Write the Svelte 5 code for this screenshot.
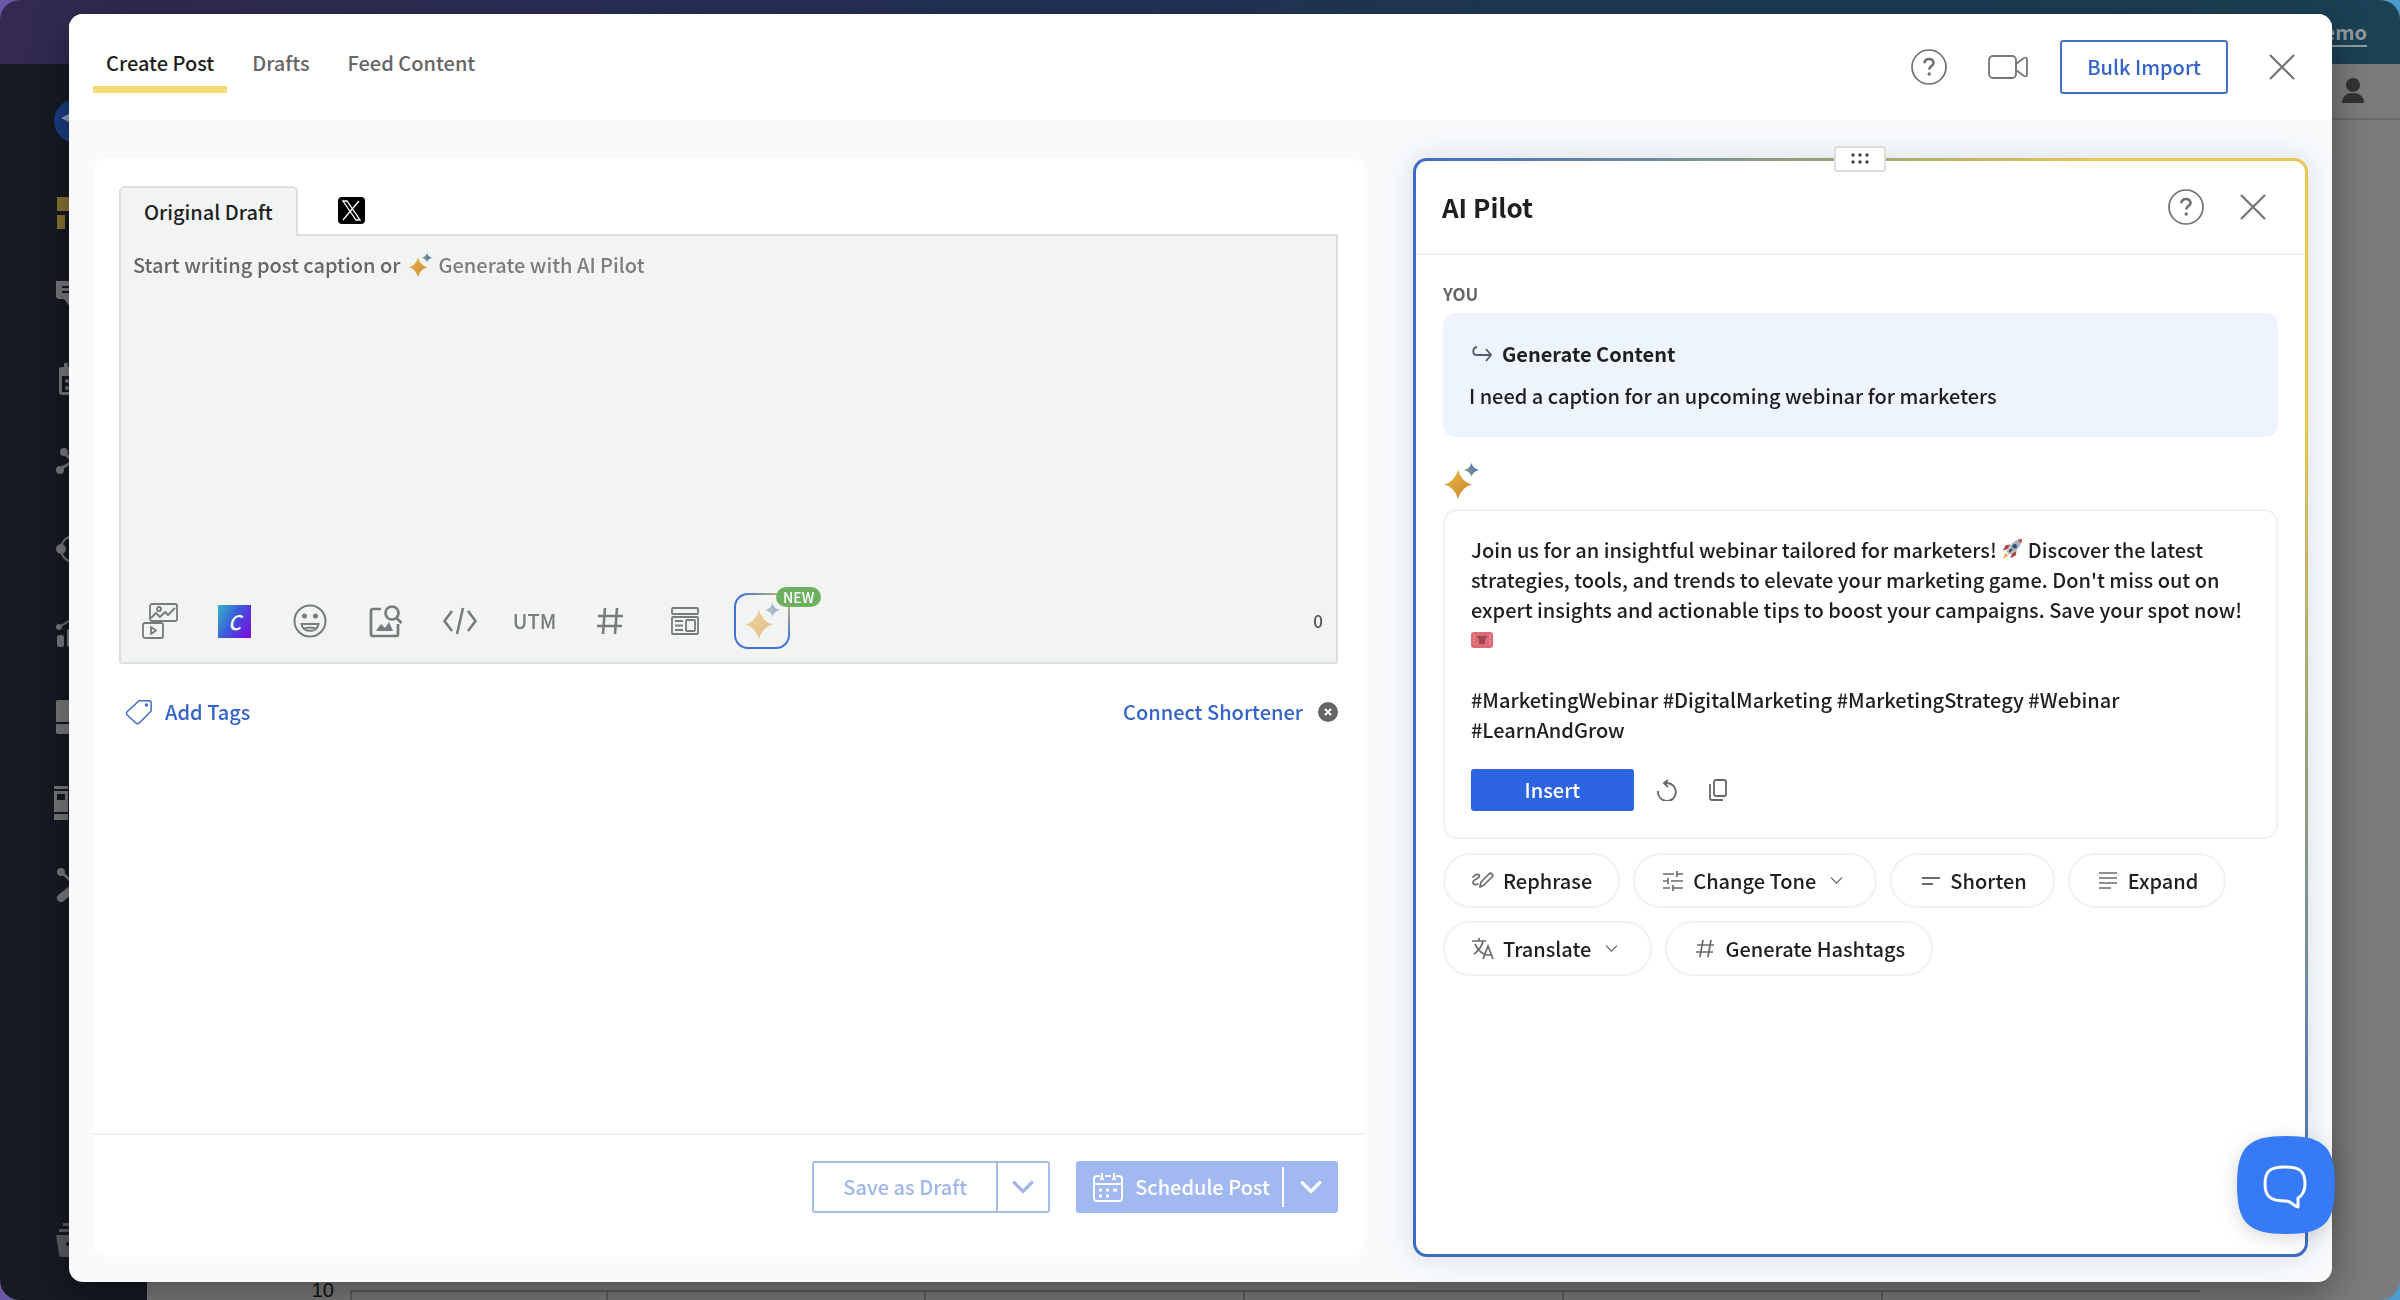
<script lang="ts">
	type Tool = { id: string; label: string };

	const tabs = ['Create Post', 'Drafts', 'Feed Content'];
	let activeTab = $state('Create Post');
	let caption = $state('');

	const tools: Tool[] = [
		{ id: 'media', label: 'Add media' },
		{ id: 'canva', label: 'Design with Canva' },
		{ id: 'emoji', label: 'Emoji' },
		{ id: 'search', label: 'Search images' },
		{ id: 'code', label: 'Variables' },
		{ id: 'utm', label: 'UTM' },
		{ id: 'hash', label: 'Hashtags' },
		{ id: 'template', label: 'Templates' },
		{ id: 'ai', label: 'AI Pilot' }
	];

	const actions = [
		{ id: 'rephrase', label: 'Rephrase', menu: false },
		{ id: 'tone', label: 'Change Tone', menu: true },
		{ id: 'shorten', label: 'Shorten', menu: false },
		{ id: 'expand', label: 'Expand', menu: false },
		{ id: 'translate', label: 'Translate', menu: true },
		{ id: 'hashtags', label: 'Generate Hashtags', menu: false }
	];

	const navItems = ['home', 'inbox', 'calendar', 'network', 'listen', 'reports', 'tasks', 'library', 'tools'];
</script>

{#snippet sparkle(size: number)}
	<svg class="sparkle" width={size} height={size} viewBox="0 0 36 36" aria-hidden="true">
		<defs>
			<linearGradient id="gold" x1="0" y1="0" x2="1" y2="1">
				<stop offset="0" stop-color="#e6bd45" />
				<stop offset="1" stop-color="#cf7f2c" />
			</linearGradient>
			<linearGradient id="teal" x1="1" y1="0" x2="0" y2="1">
				<stop offset="0" stop-color="#3768cf" />
				<stop offset="1" stop-color="#9ba368" />
			</linearGradient>
		</defs>
		<path fill="url(#gold)" d="M15 7Q18.500 19 29 21.500 18.500 24 15 36 11.500 24 1 21.500 11.500 19 15 7z" />
		<path fill="url(#teal)" d="M28.500 0Q30 5.500 36 7 30 8.500 28.500 14 27 8.500 21 7 27 5.500 28.500 0z" />
	</svg>
{/snippet}

{#snippet help()}
	<svg width="38" height="38" viewBox="0 0 38 38" fill="none" stroke="#6f6f6f" aria-hidden="true">
		<circle cx="19" cy="19" r="17" stroke-width="1.700" />
		<path d="M14.500 15.200c0-2.700 2-4.200 4.500-4.200s4.500 1.500 4.500 3.900c0 3.100-4.300 3.100-4.300 6.600" stroke-width="2.600" />
		<circle cx="19.200" cy="26" r="1.700" fill="#6f6f6f" stroke="none" />
	</svg>
{/snippet}

{#snippet cross()}
	<svg width="28" height="28" viewBox="0 0 28 28" fill="none" stroke="#6f6f6f" stroke-width="2" stroke-linecap="round" aria-hidden="true">
		<path d="M2.500 2.500l23 23M25.500 2.500l-23 23" />
	</svg>
{/snippet}

{#snippet chevron(size: number, width: number)}
	<svg width={size} height={size} viewBox="0 0 20 20" fill="none" stroke="currentColor" stroke-width={width} stroke-linecap="round" aria-hidden="true">
		<path d="M2 6l8 8 8-8" />
	</svg>
{/snippet}

{#snippet navIcon(id: string)}
	<svg width="40" height="40" viewBox="0 0 40 40" fill="#77797b" aria-hidden="true">
		{#if id === 'home'}
			<g fill="#8a7536"><path d="M3 4h20v14H3zM3 22h8v14H3z" /></g>
		{:else if id === 'inbox'}
			<path d="M2 4h34v22h-16v9L10 22H4l-2-2z" /><path d="M8 10h22M8 15h22" stroke="#161a22" stroke-width="2" />
		{:else if id === 'calendar'}
			<path d="M5 8q0-2 3-2h2V2h4v4h20v28H8q-3 0-3-3z" /><path d="M8 15h24v16H8z" fill="#161a22" /><circle cx="13" cy="20" r="2" /><circle cx="13" cy="27" r="2" />
		{:else if id === 'network'}
			<path d="M6 24l14-8M10 8l9 8" stroke="#77797b" stroke-width="3" /><circle cx="6" cy="25" r="4" /><circle cx="10" cy="7" r="4" /><circle cx="20" cy="16" r="5" />
		{:else if id === 'listen'}
			<circle cx="20" cy="20" r="13" fill="none" stroke="#77797b" stroke-width="2" /><circle cx="7" cy="20" r="5" />
		{:else if id === 'reports'}
			<rect x="3" y="22" width="7" height="12" rx="2" /><rect x="13" y="16" width="7" height="18" rx="2" /><path d="M5 14l12-7" stroke="#77797b" stroke-width="2" /><circle cx="5" cy="14" r="3" />
		{:else if id === 'tasks'}
			<path d="M2 5q0-2 2-2h30v34H4q-2 0-2-2z" /><path d="M2 26h14l5 4M15 15l6 3" stroke="#161a22" stroke-width="2" fill="none" />
		{:else if id === 'library'}
			<path d="M0 5h14v34H0zM16 1h14v38H16z" /><path d="M0 9h14M0 32h14M16 6h14M16 33h14" stroke="#161a22" stroke-width="2" /><path d="M3 13h8v6H3z" fill="#161a22" />
		{:else}
			<path d="M6 6l20 18" stroke="#77797b" stroke-width="3" /><path d="M7 33l14-11" stroke="#77797b" stroke-width="8" stroke-linecap="round" /><circle cx="7" cy="7" r="4" />
		{/if}
	</svg>
{/snippet}

{#snippet actionIcon(id: string)}
	<svg width="24" height="24" viewBox="0 0 24 24" fill="none" stroke="#6b6b6b" stroke-width="1.700" aria-hidden="true">
		{#if id === 'rephrase'}
			<g stroke-linecap="round" stroke-linejoin="round">
				<path d="M2 8c3-4 8-3 6 0-1 2-7 3-6 6 1 2 3 2 5 1" /><path d="M9 18l1-5 8-8c2-2 5 1 3 3l-8 8z" />
			</g>
		{:else if id === 'tone'}
			<path d="M2 5h11M16 5h6M16 2v6M2 12h4M10 12h12M7 9v6M2 19h7M12 19h10M12 16v6" />
		{:else if id === 'shorten'}
			<path d="M4 9h18M4 15h11" stroke-width="2" />
		{:else if id === 'expand'}
			<path d="M3 4h18M3 9h18M3 14h18M3 19h12" />
		{:else if id === 'translate'}
			<path d="M1 4h14M8 1v3M12 4c-1 5-5 10-9 13M4 7c2 5 5 8 9 10M12 22l5-13 5 13M14 18h6" />
		{:else}
			<path d="M10 3L7 20M18 3l-3 17M4 8h17M3 15h17" />
		{/if}
	</svg>
{/snippet}

<div class="app">
	<div class="banner"><a href="#demo">Demo</a></div>
	<div class="workspace">
		<nav class="sidebar" aria-label="Main">
			<a class="sidebar__logo" href="#top" aria-label="Dashboard">
				<svg width="44" height="44" viewBox="0 0 44 44" aria-hidden="true">
					<circle cx="22" cy="22" r="22" fill="#1c3d83" /><path d="M7 19l12-6v12z" fill="#98a5be" />
				</svg>
			</a>
			{#each navItems as item (item)}
				<a href="#{item}" aria-label={item}>{@render navIcon(item)}</a>
			{/each}
			<a class="sidebar__last" href="#archive" aria-label="archive">
				<svg width="40" height="40" viewBox="0 0 40 40" fill="#5c5e61" aria-hidden="true">
					<path d="M9 3h22v3H9zM5 9h30v3H5zM2 15h36l-3 20q0 2-3 2H8q-3 0-3-3z" /><circle cx="14" cy="24" r="2" fill="#161a22" />
				</svg>
			</a>
		</nav>
		<div class="canvas">
			<div class="canvas__bar">
				<svg width="22" height="26" viewBox="0 0 22 26" fill="#333" aria-hidden="true">
					<circle cx="11" cy="7" r="7" /><path d="M0 25c0-7 5-10 11-10s11 3 11 10z" />
				</svg>
			</div>
			<div class="chart"><span>10</span><i></i><i></i><i></i><i></i><i></i><i></i></div>
		</div>
	</div>
</div>

<div class="modal" role="dialog" aria-label="Create Post">
	<header class="modal__header">
		<div class="tabs" role="tablist">
			{#each tabs as tab (tab)}
				<button role="tab" aria-selected={tab === activeTab} class:active={tab === activeTab} onclick={() => (activeTab = tab)}>{tab}</button>
			{/each}
		</div>
		<div class="header-actions">
			<button class="icon" aria-label="Help">{@render help()}</button>
			<button class="icon" aria-label="Watch video">
				<svg width="40" height="24" viewBox="0 0 40 24" fill="none" stroke="#777" stroke-width="1.800" stroke-linejoin="round" aria-hidden="true">
					<rect x="1" y="1" width="27" height="22" rx="4" /><path d="M28 9l8-6q3-1 3 1v16q0 2-3 1l-8-6z" />
				</svg>
			</button>
			<button class="outline">Bulk Import</button>
			<button class="icon" aria-label="Close">{@render cross()}</button>
		</div>
	</header>

	<main class="modal__body">
		<section class="composer">
			<div class="composer__main">
				<div class="draft-tabs">
					<button class="draft-tab">Original Draft</button>
					<button class="icon" aria-label="X">
						<svg width="27" height="27" viewBox="0 0 27 27" aria-hidden="true">
							<rect width="27" height="27" rx="4" fill="#000" />
							<path d="M5 4h4l13 19h-4zM21 4L5 23" fill="none" stroke="#fff" stroke-width="1.300" />
						</svg>
					</button>
				</div>
				<div class="editor">
					<div class="editor__text">
						<textarea id="caption" bind:value={caption}></textarea>
						{#if !caption}
							<div class="hint">
								<label for="caption">Start writing post caption or</label>
								<button>{@render sparkle(24)}Generate with AI Pilot</button>
							</div>
						{/if}
					</div>
					<div class="toolbar">
						{#each tools as tool (tool.id)}
							<button class="tool tool--{tool.id}" aria-label={tool.label}>
								{#if tool.id === 'media'}
									<svg width="36" height="36" viewBox="0 0 36 36" fill="none" stroke="#777b7d" stroke-width="1.800" stroke-linejoin="round" aria-hidden="true">
										<rect x="8" y="1" width="27" height="17" rx="2" /><circle cx="17" cy="6" r="2" /><path d="M9 15l5-5 4 4 5-5 3 3 7-7" />
										<rect x="1" y="20" width="20" height="15" rx="2" /><path d="M9 24l5 3.500-5 3.500z" />
									</svg>
								{:else if tool.id === 'canva'}
									<span class="canva">C</span>
								{:else if tool.id === 'emoji'}
									<svg width="34" height="34" viewBox="0 0 34 34" fill="none" stroke="#777b7d" stroke-width="2" aria-hidden="true">
										<circle cx="17" cy="17" r="15.500" /><path d="M8.500 20h17c-.5 9-16.500 9-17 0zM11 25c3-2 9-2 12 0" />
										<circle cx="11.500" cy="12" r="1.500" fill="#777b7d" /><circle cx="22.500" cy="12" r="1.500" fill="#777b7d" />
									</svg>
								{:else if tool.id === 'search'}
									<svg width="34" height="34" viewBox="0 0 34 34" fill="none" stroke="#777b7d" stroke-width="2.700" aria-hidden="true">
										<path d="M13 5H5q-2 0-2 2v23q0 2 2 2h23q2 0 2-2V20" /><circle cx="24" cy="9" r="6.500" /><path d="M28.500 14l5 5" />
										<path d="M8 27l5-7 4 4 4-6 4 9z" fill="#777b7d" stroke="none" />
									</svg>
								{:else if tool.id === 'code'}
									<svg width="36" height="30" viewBox="0 0 36 30" fill="none" stroke="#777b7d" stroke-width="2.600" aria-hidden="true">
										<path d="M10 5L2.500 15 10 25M26 5l7.500 10L26 25M21 2l-6 26" />
									</svg>
								{:else if tool.id === 'utm'}
									UTM
								{:else if tool.id === 'hash'}
									<svg width="28" height="28" viewBox="0 0 28 28" fill="none" stroke="#777b7d" stroke-width="2.600" aria-hidden="true">
										<path d="M9 1L7 27M21 1l-2 26M2 9h25M1 19h25" />
									</svg>
								{:else if tool.id === 'template'}
									<svg width="28" height="28" viewBox="0 0 28 28" fill="none" stroke="#777b7d" stroke-width="1.800" aria-hidden="true">
										<rect x="1" y="1" width="26" height="6" rx="1" /><rect x="1" y="10" width="26" height="17" rx="1" /><rect x="15" y="13" width="9" height="11" rx="1" /><path d="M4 14h8M4 18.500h8M4 23h8" />
									</svg>
								{:else}
									<span class="ai-box">{@render sparkle(36)}</span>
									<span class="badge">NEW</span>
								{/if}
							</button>
						{/each}
						<span class="count">{caption.length}</span>
					</div>
				</div>
				<div class="links">
					<button>
						<svg width="28" height="28" viewBox="0 0 30 28" fill="none" stroke="#3e6cc6" stroke-width="1.600" stroke-linejoin="round" aria-hidden="true">
							<path d="M15 2h11q2 0 2 2v9L15 26q-2 1-3 0L2 17q-1-2 0-3z" /><circle cx="23" cy="6.500" r="1" />
						</svg>
						Add Tags
					</button>
					<button>
						Connect Shortener
						<svg width="20" height="20" viewBox="0 0 20 20" aria-hidden="true">
							<circle cx="10" cy="10" r="10" fill="#666" /><path d="M7 7l6 6M13 7l-6 6" stroke="#fff" stroke-width="2" />
						</svg>
					</button>
				</div>
			</div>
			<footer class="composer__footer">
				<div class="split split--outline">
					<button>Save as Draft</button>
					<button aria-label="Draft options">{@render chevron(22, 3)}</button>
				</div>
				<div class="split split--solid">
					<button>
						<svg width="30" height="30" viewBox="0 0 30 30" fill="none" stroke="#fff" stroke-width="2" aria-hidden="true">
							<path d="M7 4H4Q1 4 1 7v19q0 3 3 3h22q3 0 3-3V7q0-3-3-3h-3M12 4h6M1 12h28M9 1v6M21 1v6M7 7h4M19 7h4" />
							<path d="M6 18h3M13 18h3M20 18h4M6 24h3M13 24h3" stroke-width="3" />
						</svg>
						Schedule Post
					</button>
					<button aria-label="Schedule options">{@render chevron(22, 3)}</button>
				</div>
			</footer>
		</section>

		<aside class="pilot">
			<button class="pilot__handle" aria-label="Move panel">
				<svg width="18" height="12" viewBox="0 0 18 12" fill="#444" aria-hidden="true">
					{#each [2, 9, 16] as x (x)}
						<circle cx={x} cy="2" r="1.700" /><circle cx={x} cy="9" r="1.700" />
					{/each}
				</svg>
			</button>
			<header class="pilot__header">
				<h2>AI Pilot</h2>
				<button class="icon" aria-label="Help">{@render help()}</button>
				<button class="icon" aria-label="Close AI Pilot">{@render cross()}</button>
			</header>
			<div class="pilot__body">
				<h3>YOU</h3>
				<div class="prompt">
					<strong>
						<svg width="22" height="18" viewBox="0 0 22 18" fill="none" stroke="#555b66" stroke-width="1.800" aria-hidden="true">
							<path d="M6 2C1 3 1 10 6 10h14M15 4l5 6-5 6" />
						</svg>
						Generate Content
					</strong>
					<p>I need a caption for an upcoming webinar for marketers</p>
				</div>
				{@render sparkle(36)}
				<article class="answer">
					<p>
						Join us for an insightful webinar tailored for marketers!
						<svg class="emoji" width="22" height="24" viewBox="0 0 24 24" role="img" aria-label="rocket">
							<path d="M7 12l-5 2 3-6 5-1zM12 17l-2 5 6-3 1-5z" fill="#b3423f" /><path d="M5 16l3 3-6 4z" fill="#f2a93b" />
							<path d="M6 15C9 7 15 2 23 1c-1 8-6 14-14 17z" fill="#a9b4c4" /><path d="M18 2l5-1-1 5z" fill="#c2483f" /><circle cx="15" cy="9" r="2.500" fill="#31506f" /><path d="M9 15l3-3" stroke="#444" stroke-width="2" />
						</svg>
						Discover the latest strategies, tools, and trends to elevate your marketing game. Don't miss out on expert insights and actionable tips to boost your campaigns. Save your spot now!
						<svg class="emoji emoji--ticket" width="22" height="16" viewBox="0 0 22 16" role="img" aria-label="ticket">
							<rect width="22" height="16" rx="3" fill="#dc6b73" /><path d="M6 4h10l-2 4v4H8V8z" fill="#a04852" /><path d="M3 2v12M19 2v12" stroke="#ee9da2" stroke-dasharray="2 1" />
						</svg>
					</p>
					<p>#MarketingWebinar #DigitalMarketing #MarketingStrategy #Webinar #LearnAndGrow</p>
					<div class="answer__actions">
						<button class="primary">Insert</button>
						<button class="icon" aria-label="Regenerate">
							<svg width="22" height="22" viewBox="0 0 22 22" fill="none" stroke="#666" stroke-width="1.800" aria-hidden="true">
								<path d="M2 12a9 9 0 1 0 9-8H8M12 1L8 4l4 4" />
							</svg>
						</button>
						<button class="icon" aria-label="Copy">
							<svg width="20" height="22" viewBox="0 0 20 22" fill="none" stroke="#666" stroke-width="1.800" aria-hidden="true">
								<rect x="6" y="1" width="12" height="16" rx="2" /><path d="M2 5v14q0 2 2 2h11" />
							</svg>
						</button>
					</div>
				</article>
				<div class="chips">
					{#each actions as action (action.id)}
						<button class="chip">
							{@render actionIcon(action.id)}
							{action.label}
							{#if action.menu}<span class="chip__caret">{@render chevron(13, 2)}</span>{/if}
						</button>
					{/each}
				</div>
			</div>
		</aside>
	</main>
</div>

<button class="chat" aria-label="Open chat">
	<svg width="98" height="98" viewBox="0 0 98 98" fill="none" aria-hidden="true">
		<path d="M49 0c38 0 49 11 49 49s-11 49-49 49S0 87 0 49 11 0 49 0z" fill="#367af6" />
		<path d="M48 31c-15 0-20 4-20 17s6 17 21 17c6 0 7 5 12 6v-9c5-3 7-7 7-14 0-13-5-17-20-17z" stroke="#fff" stroke-width="3" stroke-linejoin="round" />
	</svg>
</button>

<style>
	:global(body) {
		font: 500 20px/30px 'Noto Sans CJK SC', 'Source Sans Pro', sans-serif;
		color: #1f1f1f;
		background: linear-gradient(90deg, #6b58a8, #4a9bd0);
	}

	button {
		padding: 0;
		border: 0;
		background: none;
		font: inherit;
		color: inherit;
		cursor: pointer;
	}

	svg {
		display: block;
		flex: none;
	}

	h2,
	h3,
	p {
		margin: 0;
	}

	.icon {
		display: grid;
		place-items: center;
	}

	/* App behind the dialog */
	.app {
		display: flex;
		flex-direction: column;
		min-height: 100vh;
		border-radius: 20px;
		overflow: hidden;
		background: #7c7c7c;
	}

	.banner {
		display: flex;
		justify-content: flex-end;
		align-items: center;
		height: 64px;
		padding-right: 33px;
		background: linear-gradient(90deg, #342a52, #27325a 35%, #1c3c55 75%, #1c4256);
	}

	.banner a {
		font-weight: 700;
		color: #8f9ba3;
		text-underline-offset: 5px;
	}

	.workspace {
		flex: 1;
		display: flex;
	}

	.sidebar {
		display: flex;
		flex-direction: column;
		gap: 44px;
		width: 93px;
		padding: 35px 0 40px 54px;
		background: #161a22;
	}

	.sidebar__logo {
		margin-bottom: 6px;
	}

	.sidebar__last {
		margin-top: auto;
	}

	.canvas {
		flex: 1;
		display: flex;
		flex-direction: column;
		justify-content: space-between;
	}

	.canvas__bar {
		display: flex;
		justify-content: flex-end;
		padding: 14px 36px;
		border-bottom: 2px solid #6a6a6a;
	}

	.chart {
		display: flex;
		height: 10px;
		margin-right: 200px;
		font: 20px/20px 'Liberation Sans', sans-serif;
		color: #111;
	}

	.chart span {
		width: 203px;
		margin-top: -10px;
		padding-right: 16px;
		box-sizing: border-box;
		text-align: right;
	}

	.chart i {
		flex: 5;
		border-top: 2px solid #5e5e5e;
		border-left: 2px solid #5e5e5e;
	}

	.chart span + i {
		flex: 4;
	}

	/* Dialog */
	.modal {
		position: fixed;
		inset: 14px 68px 18px 69px;
		display: flex;
		flex-direction: column;
		border-radius: 14px;
		overflow: hidden;
		background: #f8fafc;
		box-shadow: 0 10px 40px rgba(0, 0, 0, 0.4);
	}

	.modal__header {
		display: flex;
		justify-content: space-between;
		align-items: flex-start;
		padding: 26px 36px 26px 24px;
		background: #fff;
	}

	.tabs {
		display: flex;
		gap: 12px;
	}

	.tabs button {
		padding: 8px 13px;
		border-bottom: 7px solid transparent;
		color: #666;
	}

	.tabs .active {
		border-color: #f4dc72;
		color: #1f1f1f;
	}

	.header-actions {
		display: flex;
		align-items: center;
		gap: 40px;
	}

	.outline {
		height: 54px;
		margin-left: -8px;
		padding: 0 25px;
		border: 2px solid #4472cb;
		border-radius: 3px;
		color: #3464c9;
	}

	.modal__body {
		flex: 1;
		display: grid;
		grid-template-columns: 1.42fr 1fr;
		gap: 49px;
		padding: 38px 24px 25px;
	}

	/* Composer */
	.composer {
		display: flex;
		flex-direction: column;
		border-radius: 14px;
		background: #fff;
	}

	.composer__main {
		flex: 1;
		padding: 28px 26px;
	}

	.draft-tabs {
		display: flex;
		gap: 40px;
	}

	.draft-tab {
		height: 50px;
		margin-bottom: -2px;
		padding: 0 23px;
		border: 2px solid #dcdfe0;
		border-bottom: 0;
		border-radius: 6px 6px 0 0;
		background: #f2f4f4;
		z-index: 1;
	}

	.editor {
		display: flex;
		flex-direction: column;
		height: 430px;
		box-sizing: border-box;
		border: 2px solid #dcdfe0;
		border-radius: 0 0 3px 3px;
		background: #f2f4f4;
	}

	.editor__text {
		flex: 1;
		display: grid;
	}

	.editor__text > * {
		grid-area: 1 / 1;
		padding: 14px 12px;
	}

	textarea {
		border: 0;
		outline: 0;
		resize: none;
		background: none;
		font: inherit;
	}

	.hint {
		display: flex;
		align-self: start;
		gap: 7px;
		color: #666;
	}

	.hint button {
		display: flex;
		align-items: center;
		gap: 7px;
		color: #7d7d7d;
	}

	.toolbar {
		display: flex;
		align-items: center;
		height: 82px;
		padding: 0 13px 0 1px;
	}

	.tool {
		display: grid;
		place-items: center;
		width: 75px;
		color: #777b7d;
	}

	.tool--ai {
		position: relative;
		width: 80px;
	}

	.canva {
		width: 33px;
		background: linear-gradient(120deg, #35b8c4, #3a5bd9 45%, #7414dd 90%);
		font-style: italic;
		line-height: 33px;
		color: #fff;
	}

	.ai-box {
		display: grid;
		place-items: center;
		width: 52px;
		height: 52px;
		border: 2px solid transparent;
		border-radius: 14px;
		background:
			linear-gradient(#f2f4f4, #f2f4f4) padding-box,
			linear-gradient(to top right, #4170d6 55%, #dfc655) border-box;
	}

	.ai-box :global(.sparkle) {
		opacity: 0.5;
	}

	.badge {
		position: absolute;
		top: -6px;
		left: 54px;
		padding: 0 7px;
		border-radius: 10px;
		background: #6db160;
		font-size: 14px;
		line-height: 20px;
		color: #fff;
	}

	.count {
		margin-left: auto;
		font-size: 17px;
		color: #555;
	}

	.links {
		display: flex;
		justify-content: space-between;
		padding: 33px 0 0 6px;
	}

	.links button {
		display: flex;
		align-items: center;
		gap: 12px;
		color: #3464c9;
	}

	.links button + button {
		gap: 15px;
	}

	.composer__footer {
		display: flex;
		justify-content: flex-end;
		gap: 26px;
		padding: 26px 26px 44px;
		border-top: 2px solid #f0f1f2;
	}

	.split {
		display: flex;
		height: 52px;
		border-radius: 3px;
	}

	.split button {
		display: flex;
		align-items: center;
		gap: 12px;
	}

	.split--outline {
		box-sizing: border-box;
		border: 2px solid #a6bde9;
		color: #9fb6ea;
	}

	.split--outline button {
		padding: 0 29px;
	}

	.split--outline button + button {
		padding: 0 14px;
		border-left: 2px solid #a6bde9;
	}

	.split--solid {
		align-items: center;
		background: #a1b8f0;
		color: #fff;
	}

	.split--solid button {
		height: 40px;
		padding: 0 12px 0 17px;
	}

	.split--solid button + button {
		padding: 0 16px;
		border-left: 2px solid #fff;
	}

	/* AI Pilot */
	.pilot {
		position: relative;
		border: 3px solid transparent;
		border-radius: 14px;
		background:
			linear-gradient(#fff, #fff) padding-box,
			linear-gradient(to top right, #3f6bc6 50%, #a0a873 75%, #e8c654 88%) border-box;
		box-shadow: 0 0 28px rgba(90, 110, 130, 0.2);
	}

	.pilot__handle {
		position: absolute;
		top: -15px;
		left: 50%;
		display: grid;
		place-items: center;
		width: 52px;
		height: 26px;
		margin-left: -26px;
		border: 2px solid #dcdcdc;
		border-radius: 3px;
		background: #fff;
	}

	.pilot__header {
		display: flex;
		align-items: center;
		gap: 34px;
		padding: 27px 38px 27px 26px;
		border-bottom: 2px solid #f1f2f3;
	}

	.pilot__header h2 {
		margin-right: auto;
		font-size: 26px;
		line-height: 38px;
	}

	.pilot__body {
		padding: 24px 27px;
	}

	h3 {
		font-size: 17px;
		line-height: 30px;
		color: #666;
	}

	.prompt {
		margin: 4px 0 26px;
		padding: 26px;
		border-radius: 12px;
		background: #edf4fe;
	}

	.prompt strong {
		display: flex;
		align-items: center;
		gap: 9px;
		padding-left: 2px;
	}

	.prompt p {
		margin-top: 12px;
	}

	.answer {
		margin-top: 10px;
		padding: 24px 26px 26px;
		border: 2px solid #f1f2f3;
		border-radius: 14px;
	}

	.answer p + p {
		margin-top: 30px;
	}

	.emoji {
		display: inline-block;
		vertical-align: -3px;
	}

	.emoji--ticket {
		vertical-align: 0;
	}

	.answer__actions {
		display: flex;
		gap: 22px;
		margin-top: 24px;
	}

	.answer__actions .icon + .icon {
		margin-left: 8px;
	}

	.primary {
		width: 163px;
		height: 42px;
		border-radius: 3px;
		background: #2d64e2;
		color: #fff;
	}

	.chips {
		display: flex;
		flex-wrap: wrap;
		gap: 13px;
		margin-top: 14px;
	}

	.chip {
		display: flex;
		align-items: center;
		gap: 8px;
		height: 55px;
		padding: 0 26px;
		border: 2px solid #f1f2f3;
		border-radius: 28px;
	}

	.chip__caret {
		margin: 0 6px;
		color: #666;
	}

	.chat {
		position: fixed;
		right: 65px;
		bottom: 66px;
		filter: drop-shadow(0 4px 10px rgba(0, 0, 0, 0.15));
	}
</style>
